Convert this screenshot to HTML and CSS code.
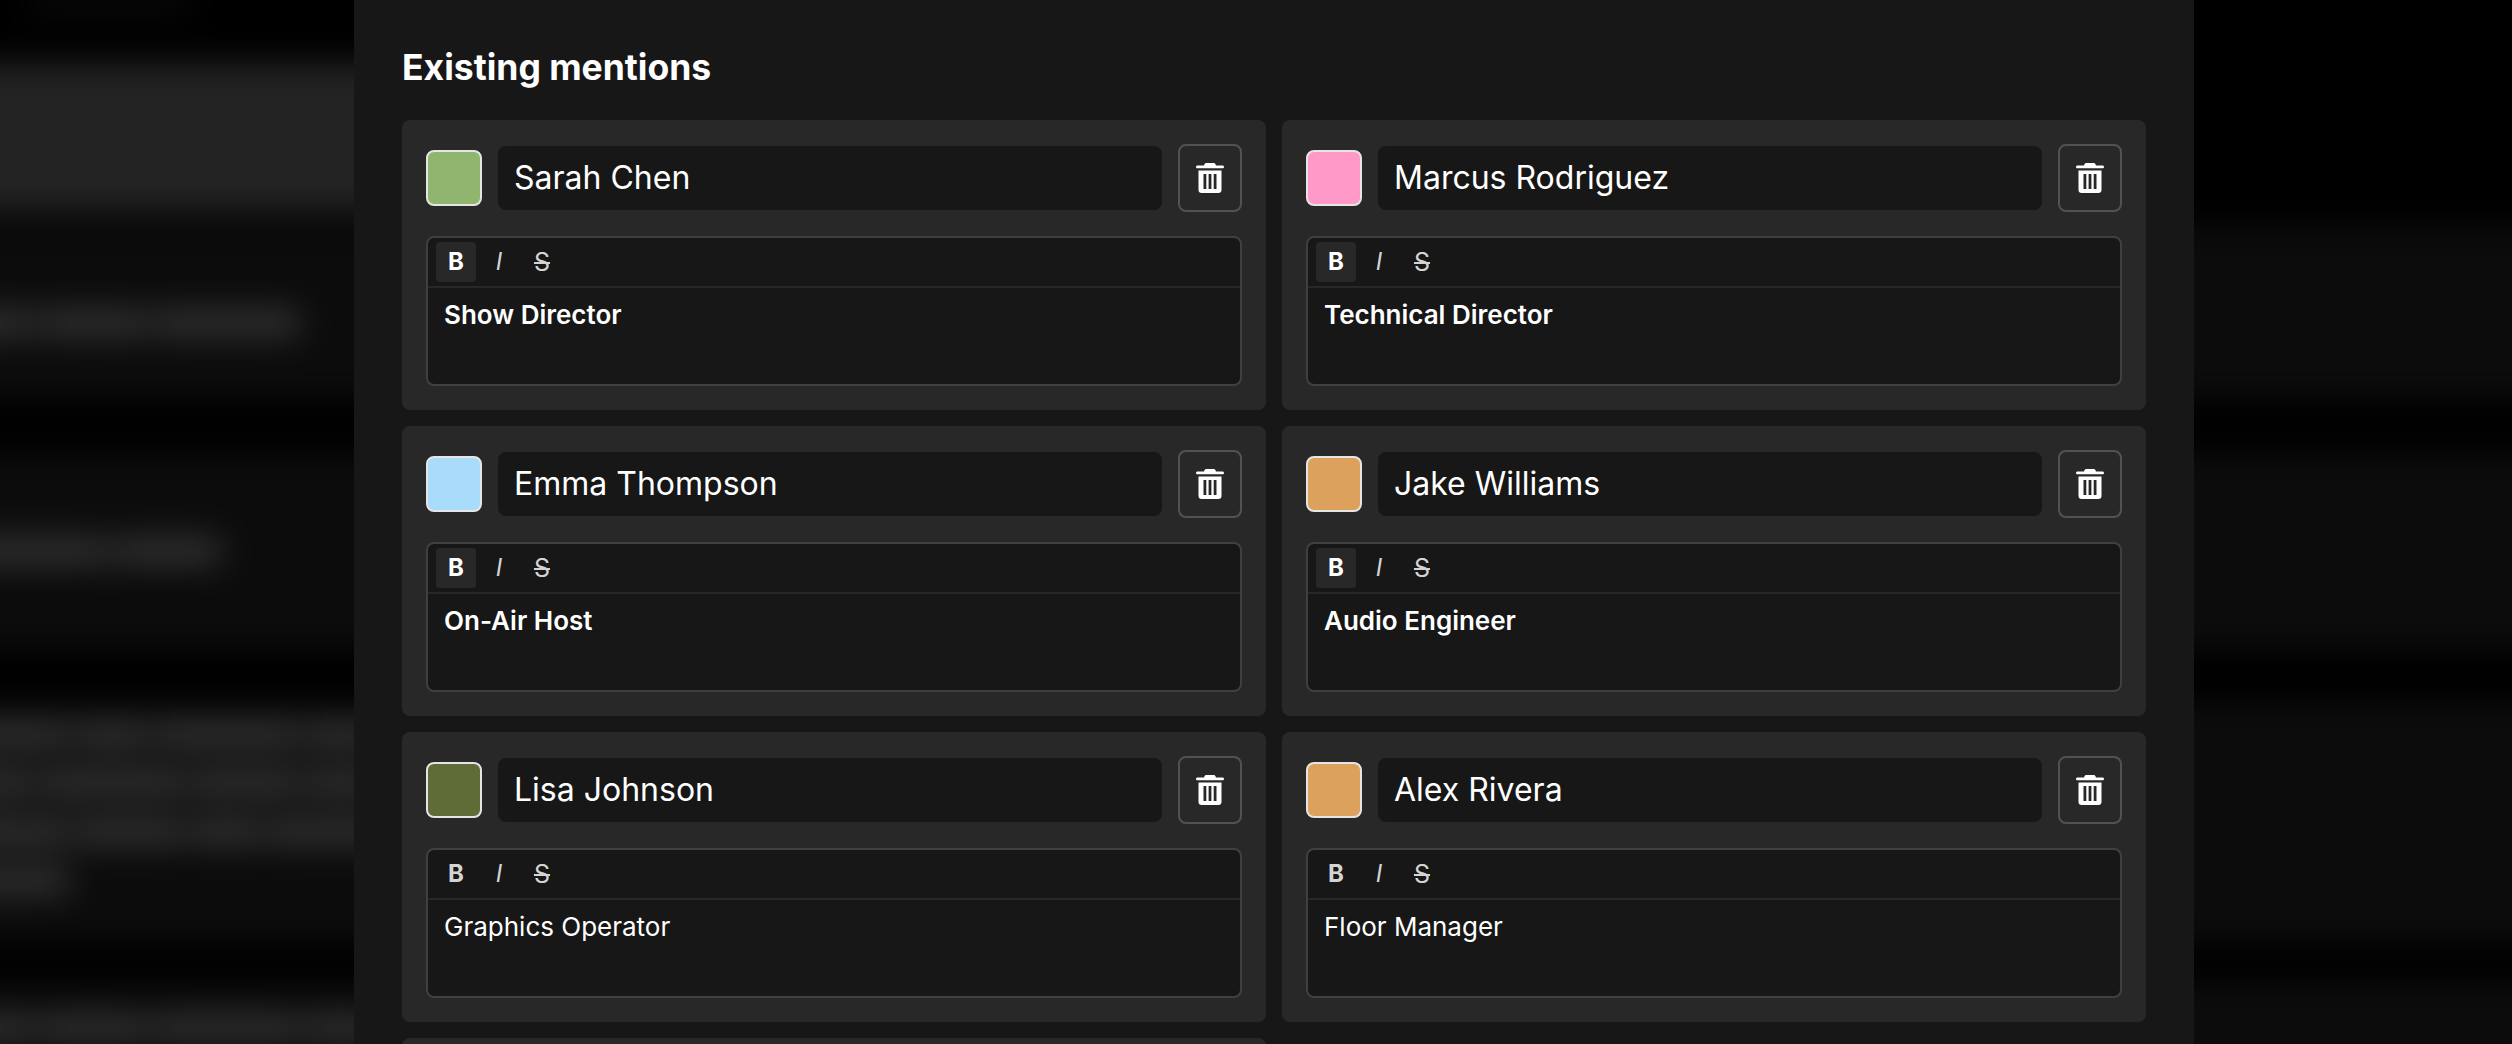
FILE: index.html
```html
<!DOCTYPE html>
<html>
  <head>
    <meta charset="utf-8">
    <title>Existing mentions</title>
    <link rel="stylesheet" href="styles.css">
  </head>
  <body>
    <div class="page">
      <div class="smudge"></div>
      <div class="hero"></div>
      <div class="row row-one">
        <div class="line"><i class="w1"></i><i class="w2"></i><i class="w3"></i></div>
      </div>
      <div class="row row-two">
        <div class="line"><i class="w3"></i><i class="w2"></i></div>
      </div>
      <div class="row row-three">
        <div class="line"><i class="w2"></i><i class="w1"></i><i class="w3"></i><i class="w1"></i></div>
        <div class="line"><i class="w1"></i><i class="w3"></i><i class="w2"></i><i class="w1"></i></div>
        <div class="line"><i class="w2"></i><i class="w2"></i><i class="w1"></i><i class="w3"></i></div>
        <div class="line"><i class="w2"></i></div>
      </div>
      <div class="row row-four">
        <div class="line"><i class="w1"></i><i class="w2"></i><i class="w3"></i><i class="w1"></i></div>
      </div>
    </div>

    <div class="panel">
      <h2 class="title">Existing mentions</h2>
      <div class="grid">

        <div class="card">
          <div class="top">
            <div class="swatch green"></div>
            <div class="name">Sarah Chen</div>
            <button class="trash"><svg viewBox="0 0 28 30"><use href="#trash"></use></svg></button>
          </div>
          <div class="editor">
            <div class="toolbar">
              <span class="tool tool-b on">B</span>
              <span class="tool tool-i">I</span>
              <span class="tool tool-s">S</span>
            </div>
            <div class="text"><strong>Show Director</strong></div>
          </div>
        </div>

        <div class="card">
          <div class="top">
            <div class="swatch pink"></div>
            <div class="name">Marcus Rodriguez</div>
            <button class="trash"><svg viewBox="0 0 28 30"><use href="#trash"></use></svg></button>
          </div>
          <div class="editor">
            <div class="toolbar">
              <span class="tool tool-b on">B</span>
              <span class="tool tool-i">I</span>
              <span class="tool tool-s">S</span>
            </div>
            <div class="text"><strong>Technical Director</strong></div>
          </div>
        </div>

        <div class="card">
          <div class="top">
            <div class="swatch blue"></div>
            <div class="name">Emma Thompson</div>
            <button class="trash"><svg viewBox="0 0 28 30"><use href="#trash"></use></svg></button>
          </div>
          <div class="editor">
            <div class="toolbar">
              <span class="tool tool-b on">B</span>
              <span class="tool tool-i">I</span>
              <span class="tool tool-s">S</span>
            </div>
            <div class="text"><strong>On-Air Host</strong></div>
          </div>
        </div>

        <div class="card">
          <div class="top">
            <div class="swatch orange"></div>
            <div class="name">Jake Williams</div>
            <button class="trash"><svg viewBox="0 0 28 30"><use href="#trash"></use></svg></button>
          </div>
          <div class="editor">
            <div class="toolbar">
              <span class="tool tool-b on">B</span>
              <span class="tool tool-i">I</span>
              <span class="tool tool-s">S</span>
            </div>
            <div class="text"><strong>Audio Engineer</strong></div>
          </div>
        </div>

        <div class="card">
          <div class="top">
            <div class="swatch olive"></div>
            <div class="name">Lisa Johnson</div>
            <button class="trash"><svg viewBox="0 0 28 30"><use href="#trash"></use></svg></button>
          </div>
          <div class="editor">
            <div class="toolbar">
              <span class="tool tool-b">B</span>
              <span class="tool tool-i">I</span>
              <span class="tool tool-s">S</span>
            </div>
            <div class="text">Graphics Operator</div>
          </div>
        </div>

        <div class="card">
          <div class="top">
            <div class="swatch orange"></div>
            <div class="name">Alex Rivera</div>
            <button class="trash"><svg viewBox="0 0 28 30"><use href="#trash"></use></svg></button>
          </div>
          <div class="editor">
            <div class="toolbar">
              <span class="tool tool-b">B</span>
              <span class="tool tool-i">I</span>
              <span class="tool tool-s">S</span>
            </div>
            <div class="text">Floor Manager</div>
          </div>
        </div>

        <div class="card"></div>
      </div>
    </div>

    <svg class="defs" width="0" height="0">
      <symbol id="trash" viewBox="0 0 28 30">
        <path fill="currentColor" fill-rule="evenodd" d="M10.500 0h7c.9 0 1.600 .5 2 1.300l.5 1.200h6.500c.8 0 1.500 .6 1.500 1.400s-.7 1.400-1.500 1.400h-25c-.8 0-1.500-.6-1.500-1.400s.7-1.400 1.500-1.400h6.500l.5-1.200c.4-.8 1.100-1.300 2-1.300zM2.500 7.500h23v19.500c0 1.700-1.300 3-3 3h-17c-1.700 0-3-1.300-3-3zM7.500 11v15h2.800V11zM12.600 11v15h2.800V11zM17.700 11v15h2.800V11z"/>
      </symbol>
    </svg>
  </body>
</html>
```

FILE: styles.css
```css
* {
  box-sizing: border-box;
}
html, body {
  margin: 0;
  height: 100%;
  overflow: hidden;
  background: #000;
  font-family: Inter, "Liberation Sans", sans-serif;
}
.defs {
  position: absolute;
}

/* blurred page behind the panel, pushed past the window so the blur has no edge */
.page {
  position: absolute;
  top: -40px;
  left: -40px;
  right: -40px;
  bottom: -40px;
  padding-top: 40px;
  overflow: hidden;
  filter: blur(16px);
}
.smudge {
  width: 160px;
  height: 8px;
  margin-left: 70px;
  background: #1c1c1c;
}
.hero {
  width: 1800px;
  height: 150px;
  margin-top: 55px;
  background: #232323;
}
.row {
  background: #0c0c0c;
  display: flex;
  flex-direction: column;
  gap: 21px;
}
.row-one {
  height: 171px;
  margin-top: 14px;
  padding-top: 82px;
}
.row-two {
  height: 195px;
  margin-top: 55px;
  padding-top: 84px;
}
.row-three {
  height: 240px;
  margin-top: 55px;
  padding-top: 17px;
}
.row-four {
  height: 120px;
  margin-top: 40px;
  padding-top: 31px;
}
.line {
  display: flex;
  gap: 4px;
  height: 28px;
}
.line i {
  display: block;
  background: #313131;
  border-radius: 8px;
}
.w1 { width: 74px; }
.w2 { width: 110px; }
.w3 { width: 148px; }

/* panel */
.panel {
  position: absolute;
  top: 0;
  left: 354px;
  width: 1840px;
  height: 100%;
  overflow: hidden;
  background: #171717;
  padding: 48px;
  color: #fff;
}
.title {
  margin: 0 0 32px;
  font-size: 35.5px;
  line-height: 40px;
  font-weight: 700;
}
.grid {
  display: grid;
  grid-template-columns: 1fr 1fr;
  gap: 16px;
}
.card {
  height: 290px;
  background: #282828;
  border-radius: 8px;
  padding: 24px;
}
.top {
  display: flex;
  align-items: center;
  gap: 16px;
  margin-bottom: 24px;
}
.swatch {
  width: 56px;
  height: 56px;
  flex: none;
  border: 2px solid #e5e5e5;
  border-radius: 8px;
}
.green { background: #90b56e; }
.pink { background: #ff99c8; }
.blue { background: #a9dcfa; }
.orange { background: #dda15e; }
.olive { background: #606c38; }

.name {
  flex: 1;
  height: 64px;
  background: #171717;
  border-radius: 8px;
  padding: 0 16px;
  font-size: 32px;
  line-height: 64px;
}
.trash {
  width: 64px;
  height: 68px;
  flex: none;
  background: transparent;
  border: 2px solid #525252;
  border-radius: 8px;
  color: #fff;
  padding: 0;
  display: flex;
  align-items: center;
  justify-content: center;
}
.trash svg {
  width: 28px;
  height: 30px;
}

/* editor */
.editor {
  height: 150px;
  background: #171717;
  border: 2px solid #404040;
  border-radius: 8px;
}
.toolbar {
  display: flex;
  gap: 3px;
  padding: 4px 8px;
  border-bottom: 2px solid #282828;
}
.tool {
  width: 40px;
  height: 40px;
  border-radius: 4px;
  color: #d4d4d4;
  font-size: 24px;
  line-height: 40px;
  text-align: center;
}
.tool-b {
  font-weight: 700;
}
.tool-i {
  font-style: italic;
  font-weight: 400;
}
.tool-s {
  text-decoration: line-through;
  font-size: 25px;
  font-weight: 400;
}
.tool.on {
  background: #282828;
  color: #fff;
}
.text {
  padding: 9px 16px;
  font-size: 26px;
  line-height: 36px;
}
.text strong {
  font-weight: 600;
}
```
